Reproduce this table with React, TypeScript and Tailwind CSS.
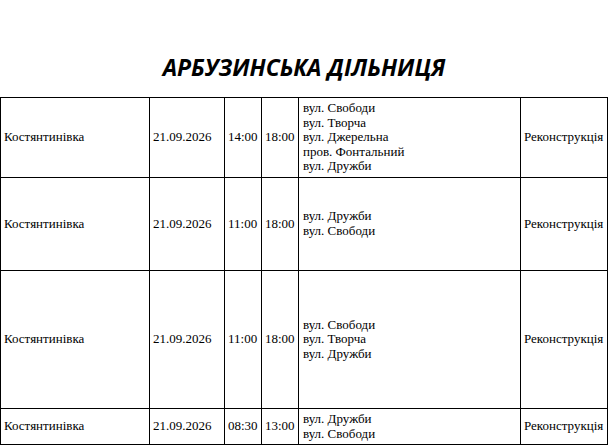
const rows = [
  { date: "21.09.2026", from: "14:00", to: "18:00", streets: ["вул. Свободи", "вул. Творча", "вул. Джерельна", "пров. Фонтальний", "вул. Дружби"], h: "h-[80px]" },
  { date: "21.09.2026", from: "11:00", to: "18:00", streets: ["вул. Дружби", "вул. Свободи"], h: "h-[93px]" },
  { date: "21.09.2026", from: "11:00", to: "18:00", streets: ["вул. Свободи", "вул. Творча", "вул. Дружби"], h: "h-[138px]" },
  { date: "21.09.2026", from: "08:30", to: "13:00", streets: ["вул. Дружби", "вул. Свободи"], h: "h-[36px]" },
];

export default function App() {
  const cell = "border border-black align-middle px-[3px] py-0 text-left";
  return (
    <div className="w-[608px] h-[446px] overflow-hidden bg-white text-black">
      <h1 className="pt-[52px] h-[97px] text-center font-['Open_Sans',sans-serif] font-bold italic text-[23px] leading-[30px]">
        АРБУЗИНСЬКА ДІЛЬНИЦЯ
      </h1>
      <table className="table-fixed border-collapse w-[607px] font-['Liberation_Serif',serif] text-[13px] leading-[14.6px]">
        <colgroup>
          <col className="w-[149px]" />
          <col className="w-[75px]" />
          <col className="w-[37px]" />
          <col className="w-[37px]" />
          <col className="w-[222px]" />
          <col className="w-[87px]" />
        </colgroup>
        <tbody>
          {rows.map((r, i) => (
            <tr key={i} className={r.h}>
              <td className={cell}>Костянтинівка</td>
              <td className={cell}>{r.date}</td>
              <td className={cell}>{r.from}</td>
              <td className={cell}>{r.to}</td>
              <td className={cell + " pl-[4px]"}>
                {r.streets.map((s) => (
                  <div key={s}>{s}</div>
                ))}
              </td>
              <td className={cell}>Реконструкція</td>
            </tr>
          ))}
        </tbody>
      </table>
    </div>
  );
}
